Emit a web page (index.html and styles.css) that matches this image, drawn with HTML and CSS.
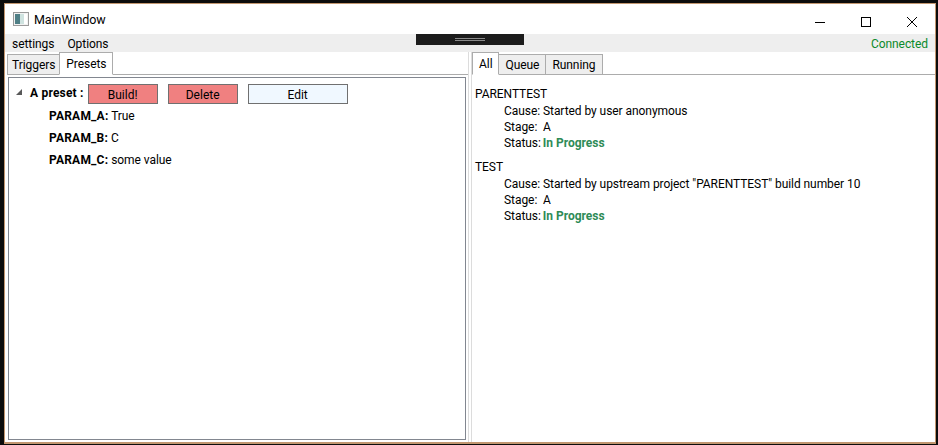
FILE: index.html
```html
<!DOCTYPE html>
<html lang="en">
<head>
  <meta charset="UTF-8" />
  <title>MainWindow</title>
  <link rel="stylesheet" href="styles.css">
</head>
<body>
  <div class="window">
    <div class="titlebar">
      <svg class="app-icon" width="16" height="16" viewBox="0 0 16 16">
        <rect x="0.5" y="1.5" width="15" height="13" fill="#f2f2f2" stroke="#9a9a9a"/>
        <rect x="2" y="3" width="5" height="10" fill="#4f7f86"/>
        <rect x="7" y="3" width="4" height="10" fill="#cfe3e0"/>
        <rect x="11" y="3" width="3" height="10" fill="#ffffff"/>
      </svg>
      <span class="title">MainWindow</span>
      <div class="controls">
        <svg class="control" width="46" height="30" viewBox="0 0 46 30"><path d="M18 18.5h10" stroke="#000" fill="none"/></svg>
        <svg class="control" width="46" height="30" viewBox="0 0 46 30"><rect x="18.5" y="13.5" width="9" height="9" stroke="#000" fill="none"/></svg>
        <svg class="control" width="46" height="30" viewBox="0 0 46 30"><path d="M18 13l10 10M28 13l-10 10" stroke="#000" fill="none"/></svg>
      </div>
    </div>

    <div class="menubar">
      <span class="menu-item">settings</span>
      <span class="menu-item">Options</span>
      <span class="status">Connected</span>
      <div class="handle"><span class="grip"></span></div>
    </div>

    <div class="main">
      <div class="pane pane-left">
        <div class="tabs">
          <span class="tab">Triggers</span>
          <span class="tab active">Presets</span>
        </div>
        <div class="tab-body">
          <div class="tree">
            <div class="preset-row">
              <span class="arrow"></span>
              <b class="preset-name">A preset :</b>
              <button class="btn btn-red">Build!</button>
              <button class="btn btn-red">Delete</button>
              <button class="btn btn-blue">Edit</button>
            </div>
            <div class="param"><b>PARAM_A:</b> True</div>
            <div class="param"><b>PARAM_B:</b> C</div>
            <div class="param"><b>PARAM_C:</b> some value</div>
          </div>
        </div>
      </div>

      <div class="pane pane-right">
        <div class="tabs">
          <span class="tab active">All</span>
          <span class="tab">Queue</span>
          <span class="tab">Running</span>
        </div>
        <div class="tab-body jobs">
          <div class="job">
            <div class="job-name">PARENTTEST</div>
            <div class="job-line">Cause: Started by user anonymous</div>
            <div class="job-line">Stage:&nbsp; A</div>
            <div class="job-line">Status: <b class="progress">In Progress</b></div>
          </div>
          <div class="job">
            <div class="job-name">TEST</div>
            <div class="job-line">Cause: Started by upstream project "PARENTTEST" build number 10</div>
            <div class="job-line">Stage:&nbsp; A</div>
            <div class="job-line">Status: <b class="progress">In Progress</b></div>
          </div>
        </div>
      </div>
    </div>
  </div>
</body>
</html>
```

FILE: styles.css
```css
html, body {
  margin: 0;
  height: 100%;
  overflow: hidden;
}
body {
  background-color: #0c0c0c;
  font-family: Roboto, "Open Sans", sans-serif;
  font-size: 12px;
  letter-spacing: -0.06px;
  color: #000;
  box-sizing: border-box;
  padding: 3px 2px 1px 4px;
}
b {
  letter-spacing: 0.2px;
}
.window {
  height: 100%;
  box-sizing: border-box;
  display: flex;
  flex-direction: column;
  background: white;
  border: 1px solid #c29670;
  border-bottom-width: 2px;
}
.titlebar {
  height: 30px;
  display: flex;
  align-items: center;
  padding-left: 8px;
  flex: none;
}
.title {
  margin-left: 5px;
  font-size: 12.5px;
}
.controls {
  margin-left: auto;
  display: flex;
}
.control {
  display: block;
}
.menubar {
  position: relative;
  height: 18px;
  flex: none;
  box-sizing: border-box;
  display: flex;
  align-items: center;
  background-color: #eeeeee;
  padding: 2px 7px 0;
  gap: 13px;
}
.status {
  margin-left: auto;
  color: #0a8a2a;
}
.handle {
  position: absolute;
  left: 411px;
  top: 0;
  width: 108px;
  height: 11px;
  background-color: #1c1c1c;
  display: flex;
  justify-content: center;
  align-items: center;
}
.grip {
  width: 30px;
  height: 3px;
  border-top: 1px solid #8a8a8a;
  border-bottom: 1px solid #8a8a8a;
  box-sizing: border-box;
}
.main {
  flex: 1;
  display: flex;
  min-height: 0;
}
.pane {
  display: flex;
  flex-direction: column;
}
.pane-left {
  width: 464px;
  padding-left: 2px;
  box-sizing: border-box;
  border-right: 1px solid #dcdcdc;
}
.pane-right {
  flex: 1;
  border-left: 1px solid #dcdcdc;
  margin-left: 2px;
  min-width: 0;
}
.tabs {
  height: 23px;
  flex: none;
  display: flex;
  align-items: flex-end;
  box-sizing: border-box;
  border-bottom: 1px solid #acacac;
}
.tab {
  height: 21px;
  box-sizing: border-box;
  margin-bottom: -1px;
  padding: 0 4px;
  line-height: 20px;
  background-color: #eeeeee;
  border: 1px solid #acacac;
  margin-right: -1px;
}
.pane-right .tab {
  padding: 0 6px;
}
.tab.active {
  height: 23px;
  background: white;
  border-bottom-color: white;
  line-height: 22px;
  padding: 0 6px;
  position: relative;
}
.tab-body {
  flex: 1;
  min-height: 0;
}
.pane-left .tab-body {
  padding: 2px 2px 2px 1px;
  display: flex;
}
.tree {
  flex: 1;
  border: 1px solid #828790;
  padding: 3px 0 0 7px;
}
.preset-row {
  display: flex;
  align-items: center;
  height: 22px;
  margin-bottom: 2px;
}
.arrow {
  width: 0;
  height: 0;
  border-style: solid;
  border-width: 0 0 6px 6px;
  border-color: transparent transparent #595959 transparent;
  margin-right: 8px;
}
.preset-name {
  margin-right: 4px;
  margin-top: 2px;
}
.btn {
  font: inherit;
  width: 70px;
  height: 20px;
  padding: 1px 0 0;
  margin-right: 10px;
  margin-top: 4px;
  border: 1px solid #707070;
  color: #000;
}
.btn-red {
  background-color: #f08080;
}
.btn-blue {
  background-color: #f0f8ff;
  width: 100px;
}
.param {
  margin-left: 33px;
  height: 22px;
  line-height: 22px;
}
.jobs {
  padding: 11px 0 0 3px;
}
.job {
  margin-bottom: 8px;
}
.job-name {
  line-height: 17px;
}
.job-line {
  line-height: 16px;
  margin-left: 29px;
}
.progress {
  color: #2e8b57;
  letter-spacing: 0;
  margin-left: -1px;
}
```
